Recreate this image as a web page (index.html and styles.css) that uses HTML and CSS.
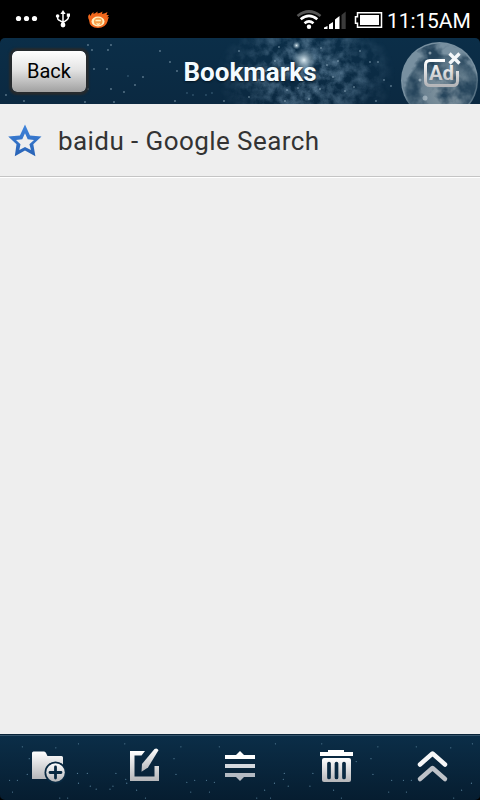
FILE: index.html
```
<!DOCTYPE html>
<html lang="en">
<head>
    <meta charset="UTF-8">
    <meta name="viewport" content="width=device-width, initial-scale=1.0">
    <title>Bookmarks</title>
    <link rel="stylesheet" href="styles.css">
</head>
<body>

    <!-- Status bar -->
    <div class="status">
        <svg class="notifications" width="120" height="38" viewBox="0 0 120 38">
            <g fill="#fff">
                <circle cx="18.5" cy="18.5" r="2.6"/>
                <circle cx="26.5" cy="18.5" r="2.6"/>
                <circle cx="34.5" cy="18.5" r="2.6"/>
                <path d="M63 10l2.6 4h-5.2z"/>
                <circle cx="63" cy="25" r="2.4"/>
                <circle cx="57.6" cy="16" r="1.8"/>
                <path d="M66.8 13.5h3.2v3.2h-3.2z"/>
            </g>
            <path d="M63 13v12M57.6 16v2q0 1.500 1.500 2.200l3.900 2.300l3.900-2.700q1.500-1 1.500-2.500v-2" fill="none" stroke="#fff" stroke-width="1.500"/>
            <path d="M89 20q-2-4 .5-6l1 2q1-3 3-4l0 2q2-1 4-2.500l0 2q3-.5 5-2l-.5 2.500q3-.5 5.500-2l-1 3l2.500 0q-1.500 1-1.500 2.500l1.500-.5q-1 2-1.500 4.500q-2 6.500-9.500 6.500q-8.500 0-9-8z" fill="#f2681c"/>
            <ellipse cx="98" cy="21.500" rx="6.500" ry="5" fill="#fff0c0"/>
            <ellipse cx="98.200" cy="21.500" rx="4.300" ry="3.800" fill="#f6a04a"/>
            <path d="M95.500 20.500h5.400M96.500 23.500l1.700 1l1.700-1" stroke="#fff0c0" stroke-width="1.400" fill="none"/>
        </svg>
        <svg class="signals" width="90" height="38" viewBox="295 0 90 38">
            <g fill="none" stroke="#fff" stroke-width="2.700">
                <path d="M297.500 16q11.500-9 23 0" stroke="#555"/>
                <path d="M300.700 19.300q8.300-6.800 16.600 0"/>
                <path d="M304.500 23.200q4.500-3.700 9 0"/>
            </g>
            <circle cx="309" cy="26.700" r="2.200" fill="#fff"/>
            <path d="M324 29v-1.500l3.500-1.500v3zM329 29v-4.500l4-2.500v7zM335 29v-9.500l4.500-3.500v13z" fill="#fff"/>
            <path d="M341.500 29v-14l4.200-3.500v17.500z" fill="#3a3a3a"/>
            <path d="M357.500 12.700h24v14.600h-24v-4h-2v-6.600h2z" fill="none" stroke="#fff" stroke-width="1.500"/>
            <path d="M360 15h19v10h-19z" fill="#fff"/>
        </svg>
        <span class="clock">11:15AM</span>
    </div>

    <!-- Title bar -->
    <div class="header">
        <svg class="sky" viewBox="0 38 480 66">
            <defs>
                <filter id="dust" x="0" y="0" width="100%" height="100%" color-interpolation-filters="sRGB">
                    <feTurbulence type="fractalNoise" baseFrequency=".09" numOctaves="5" seed="6"/>
                    <feColorMatrix values="0 0 0 0 .45  0 0 0 0 .58  0 0 0 0 .68  1.900 0 0 0 -.620"/>
                    <feComposite in2="SourceGraphic" operator="in"/>
                </filter>
                <filter id="craters" x="0" y="0" width="100%" height="100%" color-interpolation-filters="sRGB">
                    <feTurbulence type="fractalNoise" baseFrequency=".05" numOctaves="4" seed="12"/>
                    <feColorMatrix values="0 0 0 0 .15  0 0 0 0 .27  0 0 0 0 .36  3 0 0 0 -1.150"/>
                    <feComposite in2="SourceGraphic" operator="in"/>
                </filter>
                <radialGradient id="haze">
                    <stop offset="0" stop-color="#fff"/>
                    <stop offset=".5" stop-color="#fff" stop-opacity=".6"/>
                    <stop offset="1" stop-color="#fff" stop-opacity="0"/>
                </radialGradient>
                <radialGradient id="glow">
                    <stop offset="0" stop-color="#dcebf2"/>
                    <stop offset=".4" stop-color="#a6bdca" stop-opacity=".7"/>
                    <stop offset="1" stop-color="#7896a9" stop-opacity="0"/>
                </radialGradient>
                <radialGradient id="moon" cx=".55" cy=".65">
                    <stop offset="0" stop-color="#8496a1"/>
                    <stop offset=".65" stop-color="#667e8e"/>
                    <stop offset=".93" stop-color="#4c687b"/>
                    <stop offset="1" stop-color="#7890a0"/>
                </radialGradient>
            </defs>
            <ellipse cx="306" cy="75" rx="90" ry="64" fill="url(#haze)" filter="url(#dust)"/>
            <circle cx="304" cy="60" r="12" fill="url(#glow)"/>
            <circle cx="296.500" cy="45.500" r="4" fill="url(#glow)"/>
            <g class="stars">
                <path d="M88 45h0M92 50h0M111 45h0M108 50h0M107 69h0M94 69h0M143 77h0M135 85h0M124 92h0M88 89h0M111 89h0M85 102h0M114 102h0M24 101h0M6 95h0M160 51h0M170 62h0M177 71h0M239 51h0M175 101h0M224 101h0"/>
                <path d="M249 97h0M259 80h0M279 47h0M287 90h0M298 88h0M321 48h0M338 61h0M360 51h0M370 62h0M378 62h0M384 80h0M354 87h0M376 101h0M320 89h0M333 77h0M313 78h0M345 91h0M327 65h0M275 61h0M266 71h0M285 101h0M309 99h0M294 80h0M391 86h0"/>
            </g>
            <path class="stars faint" d="M128 76h0M187 93h0M193 95h0M206 95h0M212 93h0"/>
            <circle cx="439.500" cy="80.500" r="38.500" fill="url(#moon)"/>
            <circle cx="439.500" cy="80.500" r="37" fill="#fff" filter="url(#craters)"/>
            <g fill="#bdcbd3" opacity=".6">
                <circle cx="425" cy="98" r="2.500"/>
                <circle cx="420" cy="80" r="1.500"/>
                <circle cx="430" cy="53" r="1.500"/>
            </g>
        </svg>
        <button class="back">Back</button>
        <h1>Bookmarks</h1>
        <svg class="ad" width="44" height="44" viewBox="418 48 44 44">
            <defs>
                <linearGradient id="silver" x1="0" y1="0" x2="0" y2="1">
                    <stop offset="0" stop-color="#fff"/>
                    <stop offset="1" stop-color="#b5b6b9"/>
                </linearGradient>
            </defs>
            <path d="M445 59.500h-15q-4.500 0-4.500 4.500v16q0 4.500 4.500 4.500h23q4.500 0 4.500-4.500v-10" fill="none" stroke="url(#silver)" stroke-width="3"/>
            <path d="M449.500 52.500l10 10m0-10l-10 10" fill="none" stroke="#f4f7f9" stroke-width="3.300"/>
            <text x="429" y="79" textLength="25" lengthAdjust="spacingAndGlyphs">Ad</text>
        </svg>
    </div>

    <!-- Bookmark list -->
    <div class="list">
        <div class="bookmark">
            <svg width="34" height="34" viewBox="8 124 34 34">
                <defs>
                    <linearGradient id="blue" x1="0" y1="0" x2="0" y2="1">
                        <stop offset="0" stop-color="#4085dc"/>
                        <stop offset="1" stop-color="#2862b5"/>
                    </linearGradient>
                </defs>
                <path fill-rule="evenodd" fill="url(#blue)" d="M25 124.500l5 11l11.500 1l-8.200 7.800l2.100 12l-10.400-5.700l-10.200 5.700l1.700-12l-8.300-7.800l11.700-1zM25 133.300l-2.700 6l-6.300.7l4.500 4.300l-1.200 5.700l5.700-3l6 3l-1.600-5.700l4.600-4.300l-6.300-.7z"/>
            </svg>
            <span>baidu - Google Search</span>
        </div>
    </div>

    <!-- Toolbar -->
    <div class="toolbar">
        <svg class="sky" viewBox="0 734 480 66">
            <path class="stars faint" d="M76 743h0M19 746h0M53 747h0M26 758h0M24 774h0M6 780h0M14 780h0M9 792h0M65 798h0M76 783h0M75 773h0M85 773h0M88 786h0M111 786h0M114 773h0M124 779h0M125 783h0M108 789h0M94 789h0M123 743h0M57 798h0M135 790h0M144 798h0M180 746h0M173 758h0M175 774h0M219 746h0M186 782h0M194 780h0M206 780h0M214 782h0M190 792h0M209 792h0M276 743h0M285 773h0M314 773h0M284 779h0M289 786h0M311 786h0M275 783h0M265 790h0M257 798h0M271 798h0M323 743h0M380 746h0M419 746h0M373 758h0M375 774h0M394 780h0M406 780h0M414 780h0M391 792h0M409 792h0M358 761h0M454 747h0M476 743h0M475 783h0M465 790h0M457 798h0M343 798h0M335 790h0"/>
        </svg>

        <button class="tool">
            <svg width="40" height="40" viewBox="28 746 40 40">
                <path d="M32 779v-26q0-1.500 1.500-1.500h10.500q1.500 0 2 1.500l1.500 3h14q1.500 0 1.500 1.500v21.500z" fill="url(#silver)"/>
                <circle cx="55.500" cy="772.500" r="11" fill="#092941"/>
                <circle cx="55.500" cy="772.500" r="9.300" fill="url(#silver)"/>
                <path d="M55.500 767v11M50 772.500h11" stroke="#092941" stroke-width="2.800" stroke-linecap="round"/>
            </svg>
        </button>
        <button class="tool">
            <svg width="40" height="40" viewBox="124 746 40 40">
                <path d="M145 751h-15v30h29v-15h-4.500v10.500h-20v-21h7z" fill="url(#silver)"/>
                <path d="M154.500 749q2.500-1.500 4 1.200l-10.500 17.300l-6.500 4.200l.5-7.700z" fill="url(#silver)"/>
            </svg>
        </button>
        <button class="tool">
            <svg width="40" height="40" viewBox="220 746 40 40">
                <path d="M225 759v-4h11l4-4l4 4h11v4z" fill="#fff"/>
                <path d="M225 764h30v4h-30z" fill="#d5d9df"/>
                <path d="M225 773h30v4h-11l-4 4l-4-4h-11z" fill="#b4bac3"/>
            </svg>
        </button>
        <button class="tool">
            <svg width="40" height="40" viewBox="316 746 40 40">
                <path d="M320 752h8v-2h16v2h9v4h-33z" fill="#fff"/>
                <path d="M322 760q0-2 2-2h25q2 0 2 2v20q0 2-2 2h-25q-2 0-2-2z" fill="url(#silver)"/>
                <path d="M329 763.500v14M336.500 763.500v14M344 763.500v14" stroke="#092941" stroke-width="3.700" stroke-linecap="round"/>
            </svg>
        </button>
        <button class="tool">
            <svg width="40" height="40" viewBox="412 746 40 40">
                <g fill="none" stroke-width="4.500" stroke-linecap="round" stroke-linejoin="round">
                    <path d="M420 764.500l12.500-11l12.500 11" stroke="#f6f7f8"/>
                    <path d="M420 779l12.500-11l12.500 11" stroke="#bec2c8"/>
                </g>
            </svg>
        </button>
    </div>

</body>
</html>
```
FILE: styles.css
```
* {
    box-sizing: border-box;
}

body {
    display: flex;
    flex-direction: column;
    height: 100vh;
    margin: 0;
    overflow: hidden;
    background-color: #000;
    font-family: Roboto, sans-serif;
}

button {
    border: none;
    font-family: inherit;
    cursor: pointer;
}

svg {
    display: block;
}

.status {
    display: flex;
    height: 38px;
    background-color: #000;
    color: #fff;
}

.signals {
    margin-left: auto;
}

.clock {
    width: 95px;
    padding: 2px 0 0 2px;
    font-size: 21px;
    letter-spacing: -0.1px;
    line-height: 38px;
    white-space: nowrap;
}

.header {
    position: relative;
    display: grid;
    grid-template-columns: 120px 1fr 100px;
    align-items: center;
    height: 66px;
    border-radius: 5px 5px 0 0;
    background: linear-gradient(#0b2e48, #0b2941);
    overflow: hidden;
}

/* Starry background behind the bars */
.sky {
    position: absolute;
    top: 0;
    left: 0;
    width: 100%;
    height: 100%;
}

.stars {
    fill: none;
    stroke: #a9c4d3;
    stroke-width: 1.3;
    stroke-linecap: round;
}

.faint {
    stroke: #527a93;
}

.back,
.header h1,
.ad,
.tool {
    position: relative;
}

.back {
    width: 78px;
    height: 45px;
    margin-left: 10px;
    padding: 0;
    border: 2px solid #252a2e;
    border-radius: 7px;
    background: linear-gradient(#fff, #e4e4e4 45%, #a0a0a0);
    background-clip: padding-box;
    box-shadow: 0 0 2px 1px #252a2e;
    color: #000;
    font-size: 20px;
}

.header h1 {
    margin: 2px 0 0;
    color: #f3fbff;
    font-size: 26px;
    font-weight: bold;
    line-height: 32px;
    text-align: center;
    text-shadow: 0 1px 2px #041420;
}

.ad {
    justify-self: end;
    margin-right: 18px;
}

.ad text {
    fill: url(#silver);
    font-size: 21px;
    font-weight: bold;
}

.list {
    flex: 1;
    background-color: #eee;
}

.bookmark {
    display: flex;
    align-items: center;
    gap: 16px;
    height: 74px;
    padding-left: 8px;
    border-bottom: 1px solid #fff;
    box-shadow: inset 0 -1px #c4c4c4;
    color: #333;
    font-size: 26px;
    letter-spacing: 0.43px;
    white-space: nowrap;
}

.bookmark span {
    padding-top: 1px;
}

.toolbar {
    position: relative;
    display: flex;
    height: 66px;
    border-top: 1px solid #082338;
    border-radius: 0 0 5px 5px;
    background: linear-gradient(#0b2e48, #061d30);
    box-shadow: inset 0 1px #34536a;
}

.tool {
    display: flex;
    flex: 1;
    justify-content: center;
    padding: 11px 0 0;
    background: none;
}
```
